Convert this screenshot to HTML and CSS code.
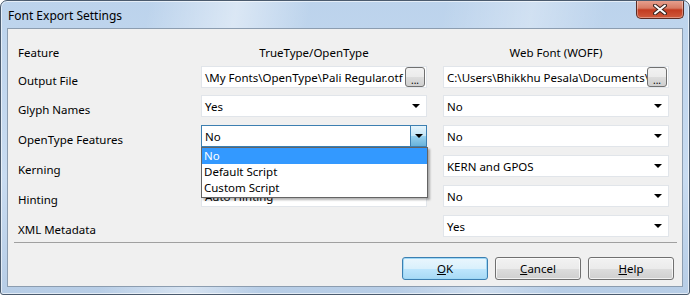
FILE: index.html
```html
<!DOCTYPE html>
<html lang="en">
<head>
  <meta charset="UTF-8">
  <title>Font Export Settings</title>
  <link rel="stylesheet" href="styles.css">
</head>
<body>
  <div class="window">
    <div class="titlebar">
      <span class="title">Font Export Settings</span>
      <button class="close" aria-label="Close">
        <svg viewBox="0 0 14 11" width="14" height="11">
          <path d="M2 1.5 L12 9.5 M12 1.5 L2 9.5" stroke="#3b2520" stroke-width="4" stroke-linecap="round"/>
          <path d="M2 1.5 L12 9.5 M12 1.5 L2 9.5" stroke="#ffffff" stroke-width="2" stroke-linecap="round"/>
        </svg>
      </button>
    </div>

    <div class="client">
      <div class="row head">
        <span class="label">Feature</span>
        <span class="colhead">TrueType/OpenType</span>
        <span class="colhead">Web Font (WOFF)</span>
      </div>

      <div class="row first">
        <span class="label">Output File</span>
        <div class="field file">
          <span class="value">\My Fonts\OpenType\Pali Regular.otf</span>
          <button class="browse">...</button>
        </div>
        <div class="field file">
          <span class="value">C:\Users\Bhikkhu Pesala\Documents\My Fonts</span>
          <button class="browse">...</button>
        </div>
      </div>

      <div class="row">
        <span class="label">Glyph Names</span>
        <div class="field select"><span class="value">Yes</span><span class="arrow"></span></div>
        <div class="field select"><span class="value">No</span><span class="arrow"></span></div>
      </div>

      <div class="row">
        <span class="label">OpenType Features</span>
        <div class="field select open">
          <span class="value">No</span>
          <span class="arrow-btn"><span class="arrow"></span></span>
          <ul class="dropdown">
            <li class="selected">No</li>
            <li>Default Script</li>
            <li>Custom Script</li>
          </ul>
        </div>
        <div class="field select"><span class="value">No</span><span class="arrow"></span></div>
      </div>

      <div class="row">
        <span class="label">Kerning</span>
        <span></span>
        <div class="field select"><span class="value">KERN and GPOS</span><span class="arrow"></span></div>
      </div>

      <div class="row">
        <span class="label">Hinting</span>
        <div class="field select"><span class="value">Auto Hinting</span><span class="arrow"></span></div>
        <div class="field select"><span class="value">No</span><span class="arrow"></span></div>
      </div>

      <div class="row last">
        <span class="label">XML Metadata</span>
        <span></span>
        <div class="field select"><span class="value">Yes</span><span class="arrow"></span></div>
      </div>

      <hr class="separator">

      <div class="actions">
        <button class="btn default"><u>O</u>K</button>
        <button class="btn"><u>C</u>ancel</button>
        <button class="btn"><u>H</u>elp</button>
      </div>
    </div>
  </div>
</body>
</html>
```

FILE: styles.css
```css
* {
  margin: 0;
  padding: 0;
  box-sizing: border-box;
}

body {
  font-family: "Noto Sans", "Open Sans", sans-serif;
  font-size: 11.5px;
  color: #000;
  background: #fff;
}

.window {
  width: 690px;
  height: 295px;
  border: 1px solid #4b5b6e;
  border-radius: 7px 7px 3px 3px;
  background:
    linear-gradient(100deg, rgba(255,255,255,0) 20%, rgba(255,255,255,0.45) 32%, rgba(255,255,255,0) 42%, rgba(255,255,255,0) 60%, rgba(255,255,255,0.3) 72%, rgba(255,255,255,0) 82%),
    linear-gradient(to bottom, #bcd3ec, #c9dcf1 60%, #b7cde6);
  box-shadow: inset 0 0 0 1px rgba(255,255,255,0.6);
  overflow: hidden;
}

.titlebar {
  height: 27px;
  display: flex;
  align-items: flex-start;
  justify-content: space-between;
  padding-left: 7px;
}

.title {
  padding-top: 6px;
  font-size: 12px;
  color: #000;
}

.close {
  width: 48px;
  height: 19px;
  margin-top: -1px;
  margin-right: 5px;
  border: 1px solid #5b2b23;
  border-top: none;
  border-radius: 0 0 5px 5px;
  background: linear-gradient(to bottom, #e8a493 0%, #d77b64 45%, #c23b20 55%, #cf5a3c 100%);
  box-shadow: inset 0 0 0 1px rgba(255,255,255,0.35);
  display: flex;
  align-items: center;
  justify-content: center;
}

.client {
  height: 259px;
  margin: 0 6px;
  border: 1px solid #8c9db0;
  background: #f0f0f0;
  padding-top: 12px;
}

.row {
  display: grid;
  grid-template-columns: 193px 226px 242px;
  height: 22px;
  align-items: center;
  margin-bottom: 8px;
}

.row > :nth-child(3) {
  margin-left: 16px;
}

.row.head {
  margin-bottom: 3px;
}

.row.first {
  margin-bottom: 7px;
}

.row.last {
  margin-bottom: 5px;
}

.label {
  padding-left: 10px;
  padding-top: 6px;
}

.head .label {
  padding-top: 1px;
}

.colhead {
  text-align: center;
  padding-top: 1px;
}

.field {
  position: relative;
  height: 22px;
  background: #fff;
  border: 1px solid #e1e5ea;
  display: flex;
  align-items: center;
}

.value {
  padding-left: 3px;
  white-space: nowrap;
  overflow: hidden;
  flex: 1;
}

.file .value {
  margin-right: 20px;
}

.browse {
  position: absolute;
  right: 1px;
  top: 0;
  width: 20px;
  height: 20px;
  border: 1px solid #707070;
  border-radius: 3px;
  background: linear-gradient(to bottom, #f2f2f2 0%, #ebebeb 50%, #dddddd 51%, #cfcfcf 100%);
  font-family: inherit;
  font-size: 10px;
  line-height: 10px;
  padding-top: 5px;
  color: #000;
}

.arrow {
  width: 0;
  height: 0;
  border-left: 4px solid transparent;
  border-right: 4px solid transparent;
  border-top: 4px solid #000;
  margin-right: 6px;
}

.select.open {
  border-color: #3c7fb1;
}

.arrow-btn {
  width: 16px;
  height: 20px;
  border-left: 1px solid #3c7fb1;
  background: linear-gradient(to bottom, #e5f4fc 0%, #c4e5f6 50%, #98d1ef 51%, #68b3db 100%);
  display: flex;
  align-items: center;
  justify-content: center;
}

.arrow-btn .arrow {
  margin-right: 0;
}

.dropdown {
  position: absolute;
  top: 21px;
  left: -1px;
  width: 227px;
  list-style: none;
  background: #fff;
  border: 1px solid #646464;
  box-shadow: 2px 2px 2px rgba(0,0,0,0.3);
  z-index: 5;
  padding-bottom: 1px;
}

.dropdown li {
  height: 16px;
  line-height: 16px;
  padding-left: 2px;
}

.dropdown li.selected {
  background: #3399ff;
  color: #fff;
}

.separator {
  border: none;
  border-top: 1px solid #a0a0a0;
  margin: 0 5px 0 6px;
}

.actions {
  display: flex;
  justify-content: flex-end;
  gap: 7px;
  padding-right: 8px;
  margin-top: 14px;
}

.btn {
  width: 86px;
  height: 23px;
  border: 1px solid #707070;
  border-radius: 3px;
  background: linear-gradient(to bottom, #f2f2f2 0%, #ebebeb 50%, #dddddd 51%, #cfcfcf 100%);
  box-shadow: inset 0 0 0 1px rgba(255,255,255,0.7);
  font-family: inherit;
  font-size: 11.5px;
  color: #000;
}

.btn.default {
  border-color: #3c7fb1;
  background: linear-gradient(to bottom, #eaf6fd 0%, #d9f0fc 50%, #bee6fd 51%, #a7d9f5 100%);
  box-shadow: inset 0 0 0 1px #9fd8f6;
}
```
